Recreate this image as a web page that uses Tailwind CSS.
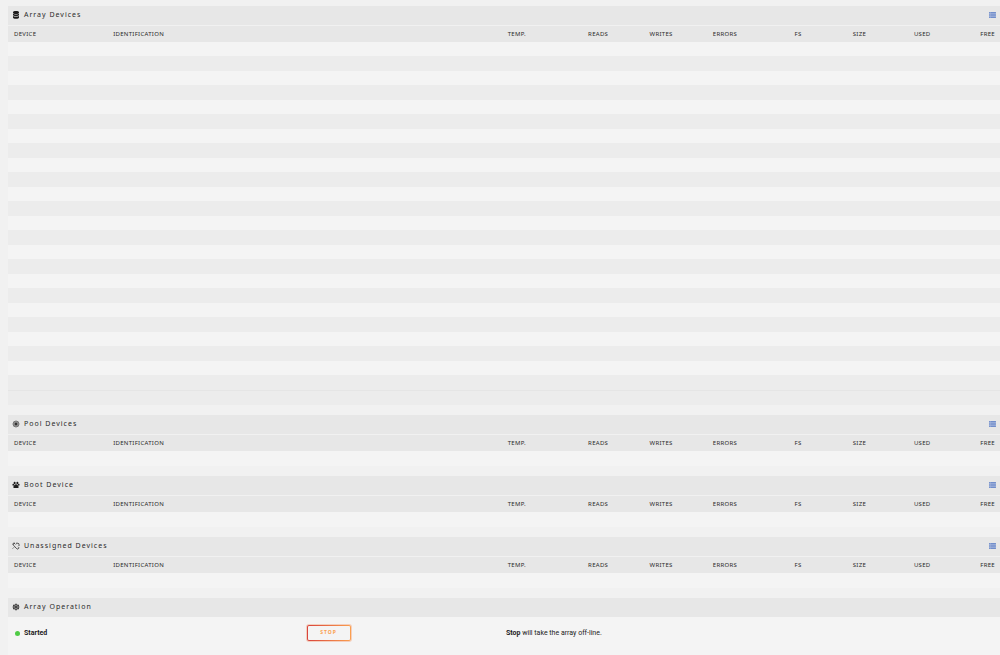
<!DOCTYPE html>
<html lang="en">
<head>
<meta charset="utf-8">
<meta name="viewport" content="width=device-width, initial-scale=1">
<title>Main</title>
<script src="https://cdn.jsdelivr.net/npm/@tailwindcss/browser@4"></script>
</head>
<body class="min-h-screen bg-[#f1f1f1] pl-2 pt-1.5 font-['Noto_Sans',sans-serif] text-[6px] text-[#2b2a2a] flex flex-col">
<svg class="hidden" aria-hidden="true">
  <symbol id="list" viewBox="0 0 16 14"><path fill="#a9b9de" d="M0 0h16v14H0z"/><path fill="#6080c4" d="M0 0h3v2H0zM4 0h12v2H4zM0 4h3v2H0zM4 4h12v2H4zM0 8h3v2H0zM4 8h12v2H4zM0 12h3v2H0zM4 12h12v2H4z"/></symbol>
</svg>
<main class="flex grow flex-col">
  <section class="mb-2.5">
    <header class="flex h-[19px] items-center bg-[#e7e7e7] pb-px pl-1 pr-1">
      <svg class="mr-1 size-2" viewBox="0 0 16 16" fill="#1c1b1b" aria-hidden="true"><path d="M2 2.500C2 1 4.500 0 8 0s6 1 6 2.500v1C14 5 11.500 6 8 6S2 5 2 3.500zM2 5.500C4 7.300 12 7.300 14 5.500V8c0 1.300-2.500 2.300-6 2.300S2 9.300 2 8zM2 10c2 1.900 10 1.900 12 0v3c0 1.800-2.500 2.500-6 2.500S2 14.800 2 13z"/></svg>
      <h2 class="grow text-[7px] tracking-[1px]">Array Devices</h2>
      <button type="button" class="flex" aria-label="Toggle array view"><svg class="h-1.5 w-[7px]" preserveAspectRatio="none"><use href="#list"/></svg></button>
    </header>
    <table class="mt-px w-full table-fixed">
      <thead class="bg-[#e7e7e7]"><tr class="h-4 text-right text-[6px] leading-[10px] tracking-wider *:p-0 *:pr-[5px] *:font-normal">
        <th scope="col" class="w-[10%] pl-1.5! text-left">DEVICE</th><th scope="col" class="pl-1.5! text-left">IDENTIFICATION</th><th scope="col" class="w-[47px] pl-1.5! text-left">TEMP.</th><th scope="col" class="w-[6.5%]">READS</th><th scope="col" class="w-[6.5%]">WRITES</th><th scope="col" class="w-[6.5%]">ERRORS</th><th scope="col" class="w-[6.5%]">FS</th><th scope="col" class="w-[6.5%]">SIZE</th><th scope="col" class="w-[6.5%]">USED</th><th scope="col" class="w-[6.5%]">FREE</th>
      </tr></thead>
      <tbody class="[&>tr:nth-child(odd)]:h-[14px] [&>tr:nth-child(odd)]:bg-[#f4f4f4] [&>tr:nth-child(even)]:h-[15px] [&>tr:nth-child(even)]:bg-[#ececec]">
        <tr><td colspan="10"></td></tr><tr><td colspan="10"></td></tr>
        <tr><td colspan="10"></td></tr><tr><td colspan="10"></td></tr>
        <tr><td colspan="10"></td></tr><tr><td colspan="10"></td></tr>
        <tr><td colspan="10"></td></tr><tr><td colspan="10"></td></tr>
        <tr><td colspan="10"></td></tr><tr><td colspan="10"></td></tr>
        <tr><td colspan="10"></td></tr><tr><td colspan="10"></td></tr>
        <tr><td colspan="10"></td></tr><tr><td colspan="10"></td></tr>
        <tr><td colspan="10"></td></tr><tr><td colspan="10"></td></tr>
        <tr><td colspan="10"></td></tr><tr><td colspan="10"></td></tr>
        <tr><td colspan="10"></td></tr><tr><td colspan="10"></td></tr>
        <tr><td colspan="10"></td></tr><tr><td colspan="10"></td></tr>
        <tr><td colspan="10"></td></tr><tr><td colspan="10"></td></tr>
      </tbody>
      <tfoot><tr class="h-[15px] border-t border-[#e5e5e5] bg-[#ececec]"><td colspan="10"></td></tr></tfoot>
    </table>
  </section>

  <section class="mb-2.5">
    <header class="flex h-[19px] items-center bg-[#e7e7e7] pb-px pl-1 pr-1">
      <svg class="mr-1 size-2" viewBox="0 0 16 16" aria-hidden="true"><circle cx="8" cy="8" r="6" fill="#999" stroke="#777" stroke-width="2"/><circle cx="8" cy="8" r="3.800" fill="#777"/><circle cx="8" cy="8" r="2" fill="#1c1b1b"/></svg>
      <h2 class="grow text-[7px] tracking-[1px]">Pool Devices</h2>
      <button type="button" class="flex" aria-label="Toggle pool view"><svg class="h-1.5 w-[7px]" preserveAspectRatio="none"><use href="#list"/></svg></button>
    </header>
    <table class="mt-px w-full table-fixed">
      <thead class="bg-[#e7e7e7]"><tr class="h-4 text-right text-[6px] leading-[10px] tracking-wider *:p-0 *:pr-[5px] *:font-normal">
        <th scope="col" class="w-[10%] pl-1.5! text-left">DEVICE</th><th scope="col" class="pl-1.5! text-left">IDENTIFICATION</th><th scope="col" class="w-[47px] pl-1.5! text-left">TEMP.</th><th scope="col" class="w-[6.5%]">READS</th><th scope="col" class="w-[6.5%]">WRITES</th><th scope="col" class="w-[6.5%]">ERRORS</th><th scope="col" class="w-[6.5%]">FS</th><th scope="col" class="w-[6.5%]">SIZE</th><th scope="col" class="w-[6.5%]">USED</th><th scope="col" class="w-[6.5%]">FREE</th>
      </tr></thead>
      <tbody><tr class="h-[15px] bg-[#f4f4f4]"><td colspan="10"></td></tr></tbody>
    </table>
  </section>

  <section class="mb-2.5">
    <header class="flex h-[19px] items-center bg-[#e7e7e7] pb-px pl-1 pr-1">
      <svg class="mr-1 size-2" viewBox="0 0 16 16" fill="#1c1b1b" aria-hidden="true"><ellipse cx="5.200" cy="4" rx="2" ry="2.600"/><ellipse cx="10.800" cy="4" rx="2" ry="2.600"/><ellipse cx="2.500" cy="7.500" rx="1.700" ry="2.200"/><ellipse cx="13.500" cy="7.500" rx="1.700" ry="2.200"/><path d="M8 6.500c2.300 0 5.300 3.500 5.300 5.700 0 3.200-3 1.600-5.300 1.600s-5.300 1.600-5.300-1.600C2.700 10 5.700 6.500 8 6.500z"/></svg>
      <h2 class="grow text-[7px] tracking-[1px]">Boot Device</h2>
      <button type="button" class="flex" aria-label="Toggle boot view"><svg class="h-1.5 w-[7px]" preserveAspectRatio="none"><use href="#list"/></svg></button>
    </header>
    <table class="mt-px w-full table-fixed">
      <thead class="bg-[#e7e7e7]"><tr class="h-4 text-right text-[6px] leading-[10px] tracking-wider *:p-0 *:pr-[5px] *:font-normal">
        <th scope="col" class="w-[10%] pl-1.5! text-left">DEVICE</th><th scope="col" class="pl-1.5! text-left">IDENTIFICATION</th><th scope="col" class="w-[47px] pl-1.5! text-left">TEMP.</th><th scope="col" class="w-[6.5%]">READS</th><th scope="col" class="w-[6.5%]">WRITES</th><th scope="col" class="w-[6.5%]">ERRORS</th><th scope="col" class="w-[6.5%]">FS</th><th scope="col" class="w-[6.5%]">SIZE</th><th scope="col" class="w-[6.5%]">USED</th><th scope="col" class="w-[6.5%]">FREE</th>
      </tr></thead>
      <tbody><tr class="h-[15px] bg-[#f4f4f4]"><td colspan="10"></td></tr></tbody>
    </table>
  </section>

  <section class="mb-2.5">
    <header class="flex h-[19px] items-center bg-[#e7e7e7] pb-px pl-1 pr-1">
      <svg class="mr-1 size-2" viewBox="0 0 16 16" fill="none" stroke="#1c1b1b" stroke-width="1.500" aria-hidden="true"><path d="M7.500 5 6 3.500A2 2 0 0 0 3 6.500l6 6.500a2.500 2.500 0 0 0 4.500-2L12 9.500M4 1v2M1 4h2M3.500 11l-2 2M8 2.500h3.500A2.500 2.500 0 0 1 14 5v3"/></svg>
      <h2 class="grow text-[7px] tracking-[1px]">Unassigned Devices</h2>
      <button type="button" class="flex" aria-label="Toggle unassigned view"><svg class="h-1.5 w-[7px]" preserveAspectRatio="none"><use href="#list"/></svg></button>
    </header>
    <table class="mt-px w-full table-fixed">
      <thead class="bg-[#e7e7e7]"><tr class="h-4 text-right text-[6px] leading-[10px] tracking-wider *:p-0 *:pr-[5px] *:font-normal">
        <th scope="col" class="w-[10%] pl-1.5! text-left">DEVICE</th><th scope="col" class="pl-1.5! text-left">IDENTIFICATION</th><th scope="col" class="w-[47px] pl-1.5! text-left">TEMP.</th><th scope="col" class="w-[6.5%]">READS</th><th scope="col" class="w-[6.5%]">WRITES</th><th scope="col" class="w-[6.5%]">ERRORS</th><th scope="col" class="w-[6.5%]">FS</th><th scope="col" class="w-[6.5%]">SIZE</th><th scope="col" class="w-[6.5%]">USED</th><th scope="col" class="w-[6.5%]">FREE</th>
      </tr></thead>
      <tbody><tr class="h-[15px] bg-[#f4f4f4]"><td colspan="10"></td></tr></tbody>
    </table>
  </section>

  <section class="flex grow flex-col">
    <header class="flex h-[19px] items-center bg-[#e7e7e7] pb-px pl-1">
      <svg class="mr-1 size-2" viewBox="0 0 16 16" fill="none" stroke="#1c1b1b" stroke-width="1.500" aria-hidden="true"><path d="M8 1v14M2 4.500l12 7M14 4.500l-12 7M5.500 2 8 4.500 10.500 2M5.500 14 8 11.500l2.500 2.500M1.500 7.300l3.200-1.200-.9-3M14.500 8.700l-3.200 1.200.9 3M14.500 7.300l-3.200-1.200.9-3M1.500 8.700l3.200 1.200-.9 3"/></svg>
      <h2 class="text-[7px] tracking-[1px]">Array Operation</h2>
    </header>
    <div class="grid grow grid-cols-[30%_20%_1fr] content-start items-center bg-[#f4f4f4] pt-2 font-[Roboto,sans-serif] text-[7px] text-[#1c1b1b]">
      <div class="flex items-center pl-[7px]"><span class="mr-1 size-[5px] rounded-full bg-[#4fcb45]"></span><strong>Started</strong></div>
      <div class="flex"><button type="button" class="ml-px h-4 w-11 rounded-xs bg-[linear-gradient(90deg,#d8433d,#fba04f)] p-px ring-1 ring-[#f08a5a]/35"><span class="flex size-full items-center justify-center rounded-[1px] bg-[#f4f4f4] font-['Noto_Sans',sans-serif] text-[5px] font-bold tracking-[1px] text-[#fba04f]">STOP</span></button></div>
      <p class="pl-0.5"><strong>Stop</strong> will take the array off-line.</p>
    </div>
  </section>
</main>
</body>
</html>
